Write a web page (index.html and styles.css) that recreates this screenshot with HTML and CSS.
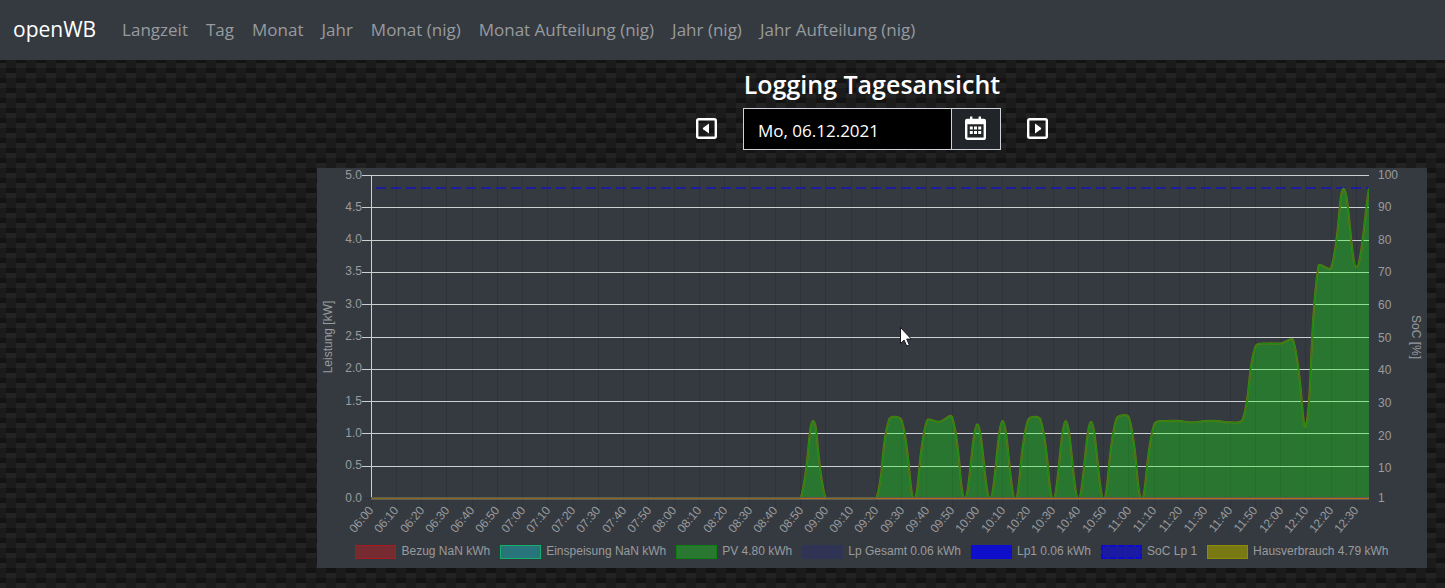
FILE: index.html
```html
<!DOCTYPE html>
<html lang="de">
<head>
  <meta charset="utf-8">
  <meta name="viewport" content="width=device-width, initial-scale=1">
  <title>openWB Logging</title>
  <link rel="stylesheet" href="styles.css">
</head>
<body>
  <nav class="navbar">
    <a class="brand" href="#">openWB</a>
    <ul class="nav-list">
      <li><a href="#">Langzeit</a></li>
      <li><a href="#">Tag</a></li>
      <li><a href="#">Monat</a></li>
      <li><a href="#">Jahr</a></li>
      <li><a href="#">Monat (nig)</a></li>
      <li><a href="#">Monat Aufteilung (nig)</a></li>
      <li><a href="#">Jahr (nig)</a></li>
      <li><a href="#">Jahr Aufteilung (nig)</a></li>
    </ul>
  </nav>

  <main class="page">
    <h1 class="title">Logging Tagesansicht</h1>
    <div class="date-row">
      <button class="step" type="button" aria-label="Vorheriger Tag">
        <svg viewBox="0 0 21 21"><rect x="1.2" y="1.2" width="18.6" height="18.6" rx="1.5"/><path class="solid" d="M13 5.5v10L7.2 11.2q-.9-.7 0-1.4z"/></svg>
      </button>
      <div class="date-group">
        <input class="date-input" type="text" value="Mo, 06.12.2021" aria-label="Datum">
        <button class="calendar" type="button" aria-label="Kalender">
          <svg viewBox="0 0 21 24"><path d="M2.2 4h16.6q1 0 1 1v16.4q0 1.4-1.4 1.4H2.6q-1.4 0-1.4-1.4V5q0-1 1-1z"/><path class="solid" d="M1 3.8h19v4.4H1zM5 .6h2.4V4H5zM13.600 .6H16V4h-2.400zM4.800 10.600h3v3h-3zM9 10.600h3v3H9zM13.200 10.600h3v3h-3zM4.800 15h3v3h-3zM9 15h3v3H9zM13.200 15h3v3h-3z"/></svg>
        </button>
      </div>
      <button class="step" type="button" aria-label="Nächster Tag">
        <svg viewBox="0 0 21 21"><rect x="1.2" y="1.2" width="18.6" height="18.6" rx="1.5"/><path class="solid" d="M8 5.500v10l5.800-4.300q.9-.7 0-1.400z"/></svg>
      </button>
    </div>

    <section class="panel">
      <svg class="chart" id="chart" viewBox="0 0 1110 373" role="img" aria-label="Leistung und SoC im Tagesverlauf"></svg>
      <ul class="legend">
        <li><span class="swatch bezug"></span>Bezug NaN kWh</li>
        <li><span class="swatch einspeisung"></span>Einspeisung NaN kWh</li>
        <li><span class="swatch pv"></span>PV 4.80 kWh</li>
        <li><span class="swatch gesamt"></span>Lp Gesamt 0.06 kWh</li>
        <li><span class="swatch lp1"></span>Lp1 0.06 kWh</li>
        <li><span class="swatch soc"></span>SoC Lp 1</li>
        <li><span class="swatch haus"></span>Hausverbrauch 4.79 kWh</li>
      </ul>
    </section>
  </main>
  <script src="chart.js"></script>
</body>
</html>
```
FILE: styles.css
```css
* {
  box-sizing: border-box;
}

body {
  margin: 0;
  min-height: 100vh;
  color: #fff;
  font-family: "Open Sans", "Noto Sans", sans-serif;
  font-size: 17px;
  background-color: #1b1b1b;
  background-image:
    conic-gradient(at 10px 5px, transparent 270deg, #131313 0),
    conic-gradient(at 10px 5px, transparent 270deg, #232323 0),
    conic-gradient(at 10px 5px, transparent 270deg, #131313 0),
    conic-gradient(at 10px 5px, transparent 270deg, #232323 0);
  background-size: 20px 20px;
  background-position: 6px 8px, 6px 13px, 16px 18px, 16px 3px;
}

.navbar {
  display: flex;
  align-items: center;
  min-height: 60px;
  padding: 0 13px 2px;
  gap: 26px;
  background: #353a41;
}

.brand {
  color: #fff;
  font-size: 21px;
  text-decoration: none;
}

.nav-list {
  display: flex;
  flex-wrap: wrap;
  gap: 18px;
  margin: 0;
  padding: 0;
  list-style: none;
}

.nav-list a {
  color: #989b9e;
  text-decoration: none;
}

.page {
  padding: 7px 18px 20px 317px;
}

.title {
  margin: 0 0 7px;
  font-size: 25px;
  font-weight: 600;
  line-height: 34px;
  text-align: center;
}

.date-row {
  display: flex;
  align-items: center;
  justify-content: center;
  gap: 26px;
  margin-bottom: 18px;
}

.step {
  display: flex;
  padding: 0 0 2px;
  border: 0;
  background: none;
}

.step svg {
  width: 21px;
  height: 21px;
}

.step svg,
.calendar svg {
  display: block;
  fill: none;
  stroke: #fff;
  stroke-width: 2.4;
}

.solid {
  fill: #fff;
  stroke: none;
}

.date-group {
  display: flex;
  width: 258px;
  height: 42px;
  border: 1px solid #ced4da;
}

.date-input {
  flex: 1;
  min-width: 0;
  padding: 2px 14px 0;
  border: 0;
  color: #fff;
  background: #000;
  font: inherit;
}

.calendar {
  display: flex;
  align-items: center;
  justify-content: center;
  width: 49px;
  padding: 0 2px 2px 0;
  border: 0;
  border-left: 1px solid #ced4da;
  background: #212529;
}

.calendar svg {
  width: 21px;
  height: 24px;
}

.panel {
  padding-bottom: 6px;
  background: #353a41;
  color: #999b9d;
  font-family: "Liberation Sans", Arial, sans-serif;
  font-size: 12px;
}

.chart {
  display: block;
  width: 100%;
}

.chart text {
  fill: #999b9d;
  font-size: 12px;
}

.legend {
  display: flex;
  flex-wrap: wrap;
  justify-content: center;
  column-gap: 10px;
  margin: 0;
  padding: 0;
  list-style: none;
  line-height: 21px;
}

.legend li {
  display: flex;
  align-items: center;
  gap: 5px;
  white-space: nowrap;
}

.swatch {
  width: 41px;
  height: 14px;
  border: 1px solid;
}

.bezug {
  border-color: #a71b20;
  background: #762b31;
}

.einspeisung {
  border: 1px solid #12b06a;
  background: #27747a;
}

.pv {
  border-color: #0d8013;
  background: #297730;
}

.gesamt {
  border-color: #2f3454;
  background: #2f3454;
}

.lp1 {
  border-color: #0c0cdc;
  background: #0e0ecb;
}

.soc {
  border: 2px dashed #0c0cd0;
  background: #1a1aa3;
}

.haus {
  border-color: #8c8c07;
  background: #797914;
}

.grid {
  stroke: #cdd0d1;
}

.grid-covered {
  stroke: #90df92;
}

.grid-time {
  stroke: #2f3339;
}

.pv-area {
  fill: #28762f;
}

.time-covered {
  stroke: #256e2c;
}

.house-line {
  fill: none;
  stroke: #6b7a14;
  stroke-width: 2;
}

.pv-line {
  fill: none;
  stroke: #148a0a;
  stroke-width: 1;
}

.soc-line {
  stroke: #1d1d9d;
  stroke-width: 2;
  stroke-dasharray: 10 5;
}

.base-halo {
  stroke: #5b5c52;
  stroke-width: 3;
}

.base {
  stroke: #8a681c;
}

.base-covered {
  stroke: #b9681b;
}

.cursor {
  fill: #fff;
  stroke: #15161c;
}
```
FILE: chart.js
```js
const svg = document.getElementById("chart");
const NS = "http://www.w3.org/2000/svg";
const area = { left: 54, right: 1052, top: 7.5, bottom: 330.5 };

// PV power in kW, one value every five minutes from 06:00 to 12:35.
const power = new Array(35).fill(0).concat([
  1.2, 0, 0, 0, 0, 0, 1.22, 1.21, 0, 1.2, 1.19, 1.26, 0, 1.15, 0, 1.2, 0,
  1.21, 1.22, 0, 1.2, 0, 1.19, 0, 1.23, 1.25, 0, 1.15, 1.2, 1.2, 1.18, 1.2,
  1.2, 1.18, 1.22, 2.35, 2.4, 2.4, 2.45, 1.13, 3.6, 3.57, 4.8, 3.58, 4.8
]);

const step = (area.right - area.left) / (power.length - 1);
const xAt = i => area.left + i * step;
const yAt = kw => area.bottom - kw / 5 * (area.bottom - area.top);
const snap = v => Math.floor(v) + 0.5;

function add(name, attrs, text, parent = svg) {
  const el = document.createElementNS(NS, name);
  for (const key in attrs) el.setAttribute(key, attrs[key]);
  if (text) el.textContent = text;
  parent.appendChild(el);
  return el;
}

function line(cls, x1, y1, x2, y2, parent) {
  return add("line", { class: cls, x1, y1, x2, y2 }, "", parent);
}

function spline(values, tension) {
  const pts = values.map((v, i) => ({ x: xAt(i), y: yAt(v) }));
  const clamp = y => Math.min(area.bottom, Math.max(area.top, y));
  const ctrl = pts.map((p, i) => {
    const a = pts[i - 1] || p;
    const b = pts[i + 1] || p;
    const d1 = Math.hypot(p.x - a.x, p.y - a.y);
    const d2 = Math.hypot(b.x - p.x, b.y - p.y);
    const f1 = tension * d1 / (d1 + d2);
    const f2 = tension * d2 / (d1 + d2);
    return [
      p.x - f1 * (b.x - a.x), clamp(p.y - f1 * (b.y - a.y)),
      p.x + f2 * (b.x - a.x), clamp(p.y + f2 * (b.y - a.y))
    ];
  });
  let d = `M${pts[0].x} ${pts[0].y}`;
  for (let i = 1; i < pts.length; i++) {
    const c = ctrl[i - 1];
    const n = ctrl[i];
    d += `C${c[2]} ${c[3]} ${n[0]} ${n[1]} ${pts[i].x} ${pts[i].y}`;
  }
  return d;
}

const curve = spline(power, 0.4);
const closed = `${curve}L${area.right} ${area.bottom}L${area.left} ${area.bottom}Z`;

const clip = add("clipPath", { id: "under-curve" });
add("path", { d: closed }, "", clip);
const plotClip = add("clipPath", { id: "plot" });
add("rect", { x: 54, y: 7, width: 998, height: 324 }, "", plotClip);

for (let i = 2; i < power.length; i += 2) {
  line("grid-time", snap(xAt(i)), 8, snap(xAt(i)), 340);
}
line("grid-time", 45, 330.5, 54, 330.5);
for (let kw = 0.5; kw <= 5; kw += 0.5) {
  line("grid", 45, snap(yAt(kw)), area.right, snap(yAt(kw)));
}
line("grid", 54.5, 7, 54.5, 330);
line("grid-time", 54.5, 332, 54.5, 340);
line("soc-line", 59, 20, area.right, 20);

add("path", { class: "pv-area", d: closed });
const covered = add("g", { "clip-path": "url(#under-curve)" });
for (let i = 2; i < power.length; i += 2) {
  line("time-covered", snap(xAt(i)), 8, snap(xAt(i)), 330, covered);
}
for (let kw = 0.5; kw <= 4.5; kw += 0.5) {
  line("grid-covered", 54, snap(yAt(kw)), area.right, snap(yAt(kw)), covered);
}

const lines = add("g", { "clip-path": "url(#plot)" });
add("path", { class: "house-line", d: curve }, "", lines);
add("path", { class: "pv-line", d: curve }, "", lines);
line("base-halo", area.left, 330.5, area.right, 330.5);
line("base", area.left, 330.5, area.right, 330.5);
let start = -1;
power.forEach((v, i) => {
  const busy = v > 0 || power[i + 1] > 0;
  if (busy && start < 0) start = i;
  if (start >= 0 && (!busy || i === power.length - 1)) {
    line("base-covered", xAt(start), 330.5, xAt(i), 330.5);
    start = -1;
  }
});

for (let kw = 0; kw <= 5; kw += 0.5) {
  add("text", { x: 45, y: Math.round(yAt(kw)) + 3, "text-anchor": "end" }, kw.toFixed(1));
}
[1, 10, 20, 30, 40, 50, 60, 70, 80, 90, 100].forEach(v => {
  const y = area.bottom - (v - 1) / 99 * (area.bottom - area.top);
  add("text", { x: 1061, y: Math.round(y) + 3 }, String(v));
});
for (let i = 0; i < power.length; i += 2) {
  const minutes = 360 + i * 5;
  const label = String(Math.floor(minutes / 60)).padStart(2, "0") + ":" + String(minutes % 60).padStart(2, "0");
  add("text", { x: 0, y: 4, "text-anchor": "end", transform: `translate(${Math.round(xAt(i))} 340) rotate(-50)` }, label);
}
add("text", { "text-anchor": "middle", transform: "translate(15 169) rotate(-90)" }, "Leistung [kW]");
add("text", { "text-anchor": "middle", transform: "translate(1095 169) rotate(90)" }, "SoC [%]");

add("path", { class: "cursor", d: "M583.500 159.500v16l3.600-3.400 2.600 6 2.600-1.200-2.600-5.800h4.600z" });
```
